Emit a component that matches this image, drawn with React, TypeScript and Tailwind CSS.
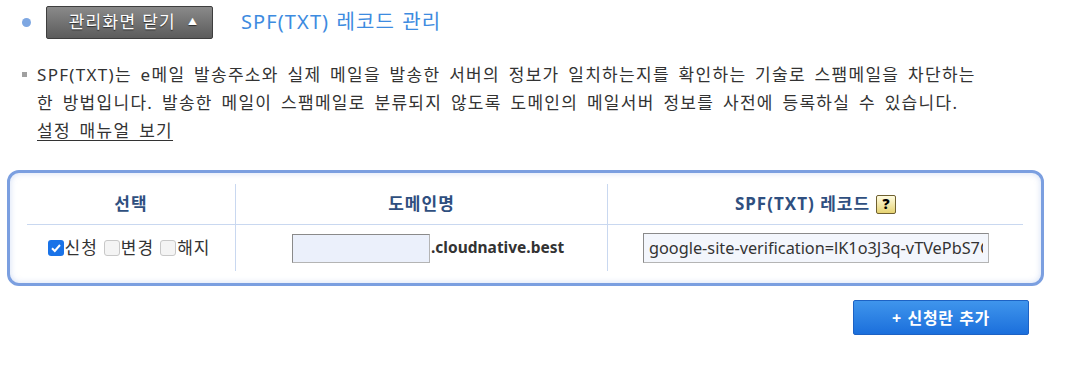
const font = { fontFamily: '"Noto Sans", "Noto Sans CJK KR", sans-serif' };

const HelpIcon = () => (
  <span className="ml-[6px] inline-flex h-[19px] w-[20px] items-center justify-center rounded-[2px] border border-[#6f6030] bg-gradient-to-b from-[#fffce0] to-[#e6d270] text-[14px] font-black leading-none tracking-normal text-black">
    ?
  </span>
);

const Check = ({ checked, label }: { checked?: boolean; label: string }) => (
  <label className="flex items-center">
    {checked ? (
      <span className="flex h-[16px] w-[16px] items-center justify-center rounded-[3px] bg-[#1a73e8]">
        <svg width="12" height="12" viewBox="0 0 12 12">
          <path d="M2 6.2 L4.8 9 L10 3" stroke="#fff" strokeWidth="2" fill="none" />
        </svg>
      </span>
    ) : (
      <span className="h-[16px] w-[16px] rounded-[3px] border border-[#c8c8c8] bg-[#f4f4f4]"></span>
    )}
    <span className="ml-[1px] text-[17px] tracking-[1px] text-[#333]">{label}</span>
  </label>
);

export default function App() {
  return (
    <div className="h-[365px] w-[1092px] bg-white" style={font}>
      {/* title row */}
      <div className="flex h-[43px] items-center pt-[1px]">
        <span className="ml-[22px] h-[9px] w-[9px] rounded-full bg-[#7ea7e2]"></span>
        <button className="ml-[15px] flex h-[33px] w-[167px] items-center justify-center rounded-[2px] border border-[#3e3e3e] bg-gradient-to-b from-[#8a8a8a] to-[#5c5c5c] pl-[8px] text-[17px] tracking-[1.3px] text-white [text-shadow:0_1px_1px_rgba(0,0,0,0.6)]">
          관리화면 닫기
          <span className="ml-[12px] text-[9px]">▲</span>
        </button>
        <h1 className="ml-[28px] text-[20px] tracking-[1.1px] text-[#3d8be0] [word-spacing:1px]">SPF(TXT) 레코드 관리</h1>
      </div>

      {/* description */}
      <div className="mt-[18px] flex">
        <span className="ml-[22px] mt-[11px] h-[5px] w-[5px] bg-[#a0a0a0]"></span>
        <p className="ml-[10px] w-[1000px] text-[17px] leading-[28px] tracking-[1.3px] text-[#333] [word-spacing:3px]">
          SPF(TXT)는 e메일 발송주소와 실제 메일을 발송한 서버의 정보가 일치하는지를 확인하는 기술로 스팸메일을 차단하는
          <br />한 방법입니다. 발송한 메일이 스팸메일로 분류되지 않도록 도메인의 메일서버 정보를 사전에 등록하실 수 있습니다.
          <br />
          <a className="underline underline-offset-[3px]">설정 매뉴얼 보기</a>
        </p>
      </div>

      {/* table box */}
      <div className="ml-[7px] mt-[25px] h-[116px] w-[1037px] rounded-[12px] border-[3px] border-[#7b9fe0] px-[17px] pt-[11px] shadow-[inset_0_0_6px_rgba(123,159,224,0.35)]">
        <div className="grid grid-cols-[208px_372px_416px]">
          <div className="flex h-[41px] items-center justify-center border-b border-[#c9d8f0] text-[17px] font-bold tracking-[1px] text-[#2f4f80]">선택</div>
          <div className="flex h-[41px] items-center justify-center border-b border-l border-[#c9d8f0] text-[17px] font-bold tracking-[1px] text-[#2f4f80]">도메인명</div>
          <div className="flex h-[41px] items-center justify-center border-b border-l border-[#c9d8f0] text-[17px] font-bold tracking-[1px] text-[#2f4f80]">
            SPF(TXT) 레코드
            <HelpIcon />
          </div>

          <div className="flex h-[46px] items-center justify-center gap-[6px] pr-[4px]">
            <Check checked label="신청" />
            <Check label="변경" />
            <Check label="해지" />
          </div>
          <div className="flex h-[46px] items-center border-l border-[#c9d8f0] pl-[56px]">
            <input className="h-[29px] w-[138px] border border-[#b4b4b4] border-l-[#8a8a8a] border-t-[#8a8a8a] bg-[#ebf0fb] outline-none" />
            <span className="ml-[1px] text-[15.5px] font-bold text-[#333]">.cloudnative.best</span>
          </div>
          <div className="flex h-[46px] items-center border-l border-[#c9d8f0] pl-[35px]">
            <input
              className="h-[30px] w-[346px] border border-[#b4b4b4] border-l-[#8a8a8a] border-t-[#8a8a8a] bg-[#f3f6fc] px-[5px] text-[16.3px] text-[#333] outline-none"
              defaultValue="google-site-verification=lK1o3J3q-vTVePbS7Cx0kQ"
            />
          </div>
        </div>
      </div>

      {/* add button */}
      <div className="flex justify-end pr-[63px] pt-[14px]">
        <button className="h-[35px] w-[176px] rounded-[2px] border border-[#1d62c4] bg-gradient-to-b from-[#3f95ec] to-[#1b6fdc] text-[16px] font-bold tracking-[0.6px] text-white [word-spacing:1px]">
          + 신청란 추가
        </button>
      </div>
    </div>
  );
}
